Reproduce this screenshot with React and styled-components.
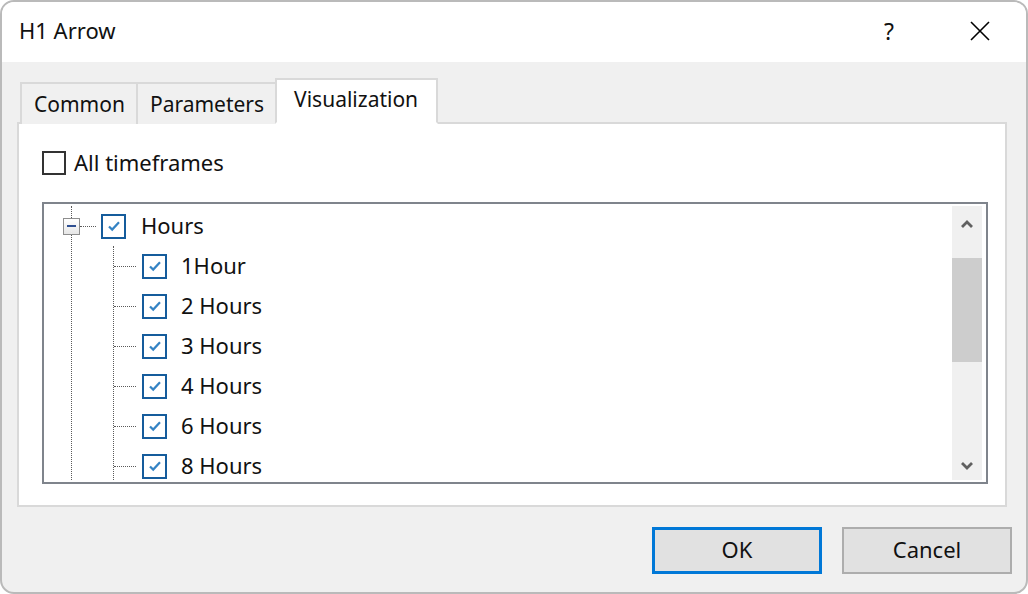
import React from "react";
import styled, { createGlobalStyle } from "styled-components";

const GlobalStyle = createGlobalStyle`
  html, body {
    margin: 0;
    padding: 0;
    background: #ffffff;
  }
  * {
    box-sizing: border-box;
  }
`;

const Window = styled.div`
  width: 1028px;
  height: 594px;
  border: 2px solid #bababa;
  border-radius: 14px;
  overflow: hidden;
  display: flex;
  flex-direction: column;
  background: #f0f0f0;
  font-family: "Noto Sans", "Open Sans", sans-serif;
  color: #111;
`;

const TitleBar = styled.div`
  height: 60px;
  background: #fff;
  display: flex;
  align-items: center;
  padding: 0 0 0 17px;
`;

const Title = styled.div`
  flex: 1;
  font-size: 22px;
  margin-top: -4px;
`;

const TitleButton = styled.div`
  width: ${p => p.w}px;
  display: flex;
  justify-content: center;
  align-items: center;
  font-size: 23px;
  margin-top: -3px;
`;

const Body = styled.div`
  flex: 1;
  display: flex;
  flex-direction: column;
  padding: 16px 19px 0 15px;
`;

const TabStrip = styled.div`
  display: flex;
  align-items: flex-end;
  padding-left: 3px;
  height: 46px;
  position: relative;
  z-index: 1;
  margin-bottom: -2px;
`;

const Tab = styled.div`
  height: ${p => (p.active ? 46 : 42)}px;
  padding: ${p => (p.active ? "4px 18px 0 17px" : "5px 11px 0 12px")};
  margin-left: ${p => (p.first ? 0 : -2)}px;
  background: ${p => (p.active ? "#fff" : "#f0f0f0")};
  border: 2px solid #d9d9d9;
  border-bottom: ${p => (p.active ? "2px solid #fff" : "none")};
  font-size: 21px;
  line-height: 30px;
`;

const Panel = styled.div`
  height: 385px;
  background: #fff;
  border: 2px solid #d9d9d9;
  padding: 27px 17px 21px 23px;
  display: flex;
  flex-direction: column;
`;

const CheckRow = styled.label`
  display: flex;
  align-items: center;
  gap: 8px;
  font-size: 22px;
  height: 24px;
`;

const CheckText = styled.span`
  margin-top: -2px;
`;

const PlainBox = styled.span`
  width: 24px;
  height: 24px;
  border: 2px solid #333;
  background: #fff;
  display: inline-block;
`;

const TreeBox = styled.div`
  margin-top: 27px;
  height: 282px;
  border: 2px solid #7f848c;
  padding: 2px 4px 2px 2px;
  display: flex;
  overflow: hidden;
`;

const TreeContent = styled.div`
  flex: 1;
  overflow: hidden;
  padding-left: 25px;
`;

const RootBranch = styled.div`
  border-left: 1px dotted #5a5a5a;
  min-height: 100%;
`;

const NodeRow = styled.div`
  height: 40px;
  display: flex;
  align-items: center;
  font-size: 22px;
`;

const NodeLabel = styled.span`
  margin-top: -2px;
`;

const Expander = styled.span`
  width: 17px;
  height: 17px;
  margin-left: -9px;
  border: 1px solid #8e8e8e;
  background: linear-gradient(#ffffff, #e6e6e6);
  display: flex;
  align-items: center;
  justify-content: center;
  &::after {
    content: "";
    width: 9px;
    height: 2px;
    background: #2f4f91;
  }
`;

const Connector = styled.span`
  width: ${p => p.w}px;
  border-top: 1px dotted #5a5a5a;
  margin-right: ${p => p.gap}px;
`;

const BlueBox = styled.span`
  width: 25px;
  height: 25px;
  border: 2px solid #155c9c;
  background: #fff;
  display: flex;
  align-items: center;
  justify-content: center;
  margin-right: ${p => p.gap}px;
  flex: none;
`;

const Children = styled.div`
  margin-left: 41px;
  border-left: 1px dotted #5a5a5a;
`;

const Scrollbar = styled.div`
  width: 30px;
  background: #f0f0f0;
  display: flex;
  flex-direction: column;
`;

const ArrowZone = styled.div`
  height: ${p => p.h}px;
  display: flex;
  justify-content: center;
  align-items: ${p => (p.down ? "flex-end" : "flex-start")};
  padding: ${p => (p.down ? "0 0 9px" : "13px 0 0")};
`;

const Thumb = styled.div`
  height: 104px;
  background: #cdcdcd;
`;

const Track = styled.div`
  flex: 1;
`;

const Footer = styled.div`
  flex: 1;
  display: flex;
  justify-content: flex-end;
  align-items: flex-start;
  gap: 20px;
  padding-top: 20px;
`;

const Button = styled.button`
  width: 170px;
  height: 47px;
  background: #e1e1e1;
  border: ${p => (p.primary ? "3px solid #0078d7" : "2px solid #adadad")};
  font-family: inherit;
  font-size: 22px;
  color: #111;
  padding: 0 0 4px;
  margin-right: ${p => (p.last ? -5 : 0)}px;
`;

const Check = () => (
  <svg width="14" height="12" viewBox="0 0 14 12">
    <path d="M2 6.5 L5.2 9.6 L12 2.2" fill="none" stroke="#3483c4" strokeWidth="2.2" />
  </svg>
);

const Chevron = ({ down }) => (
  <svg width="14" height="10" viewBox="0 0 14 10">
    <path
      d={down ? "M2 2 L7 7 L12 2" : "M2 8 L7 3 L12 8"}
      fill="none"
      stroke="#606060"
      strokeWidth="2.8"
    />
  </svg>
);

const children = ["1Hour", "2 Hours", "3 Hours", "4 Hours", "6 Hours", "8 Hours"];

export default function App() {
  return (
    <>
      <GlobalStyle />
      <Window>
        <TitleBar>
          <Title>H1 Arrow</Title>
          <TitleButton w={90}>?</TitleButton>
          <TitleButton w={92}>
            <svg width="22" height="22" viewBox="0 0 22 22">
              <path d="M2 2 L20 20 M20 2 L2 20" stroke="#000" strokeWidth="1.6" />
            </svg>
          </TitleButton>
        </TitleBar>
        <Body>
          <TabStrip>
            <Tab first>Common</Tab>
            <Tab>Parameters</Tab>
            <Tab active>Visualization</Tab>
          </TabStrip>
          <Panel>
            <CheckRow>
              <PlainBox />
              <CheckText>All timeframes</CheckText>
            </CheckRow>
            <TreeBox>
              <TreeContent>
                <RootBranch>
                  <NodeRow>
                    <Expander />
                    <Connector w={16} gap={5} />
                    <BlueBox gap={15}>
                      <Check />
                    </BlueBox>
                    <NodeLabel>Hours</NodeLabel>
                  </NodeRow>
                  <Children>
                    {children.map(c => (
                      <NodeRow key={c}>
                        <Connector w={22} gap={6} />
                        <BlueBox gap={14}>
                          <Check />
                        </BlueBox>
                        <NodeLabel>{c}</NodeLabel>
                      </NodeRow>
                    ))}
                  </Children>
                </RootBranch>
              </TreeContent>
              <Scrollbar>
                <ArrowZone h={52}>
                  <Chevron />
                </ArrowZone>
                <Thumb />
                <Track />
                <ArrowZone h={40} down>
                  <Chevron down />
                </ArrowZone>
              </Scrollbar>
            </TreeBox>
          </Panel>
          <Footer>
            <Button primary>OK</Button>
            <Button last>Cancel</Button>
          </Footer>
        </Body>
      </Window>
    </>
  );
}
